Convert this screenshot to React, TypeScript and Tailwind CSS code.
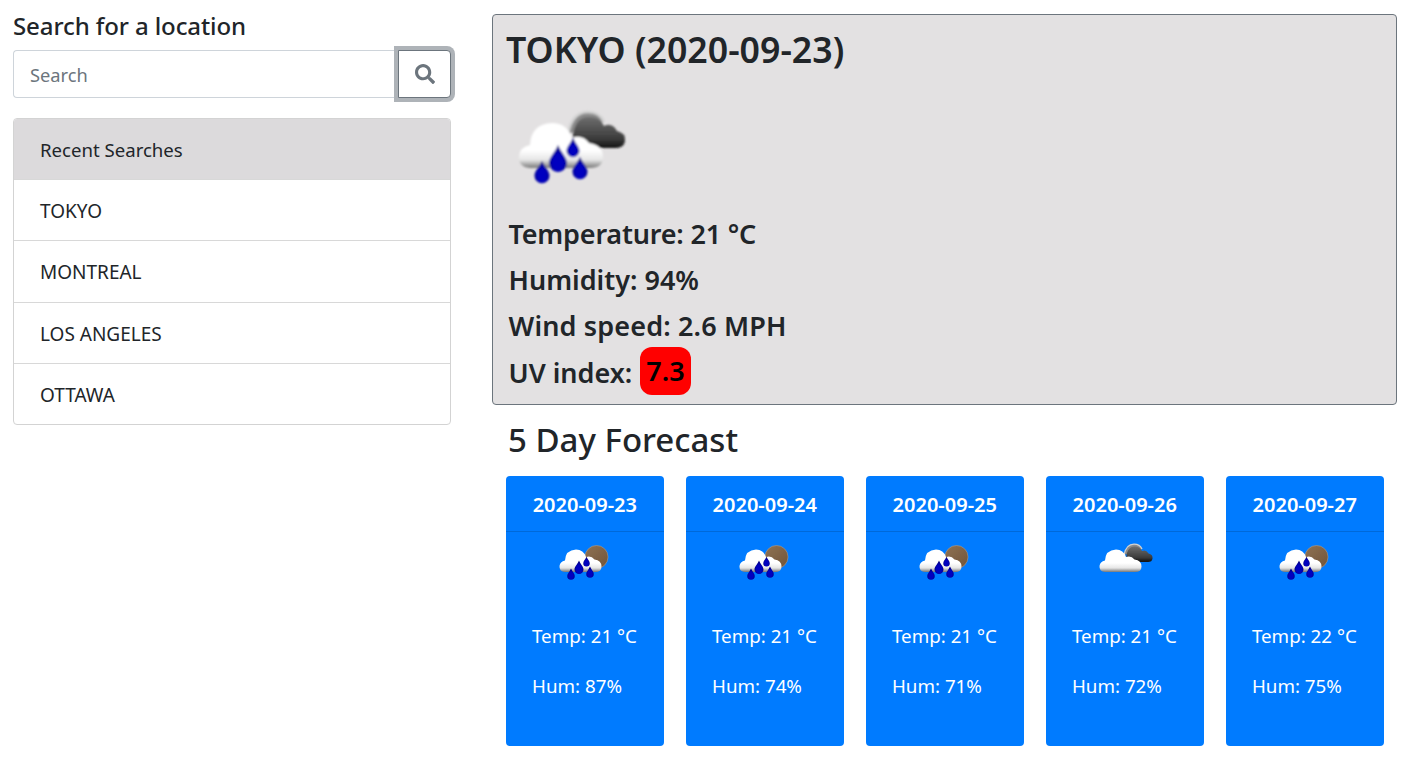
import { FaSearch } from "react-icons/fa";

type IconKind = "rainDark" | "rainSun" | "cloudDark";

const recent = ["TOKYO", "MONTREAL", "LOS ANGELES", "OTTAWA"];

const forecast: { date: string; temp: number; hum: number; icon: IconKind }[] = [
  { date: "2020-09-23", temp: 21, hum: 87, icon: "rainSun" },
  { date: "2020-09-24", temp: 21, hum: 74, icon: "rainSun" },
  { date: "2020-09-25", temp: 21, hum: 71, icon: "rainSun" },
  { date: "2020-09-26", temp: 21, hum: 72, icon: "cloudDark" },
  { date: "2020-09-27", temp: 22, hum: 75, icon: "rainSun" },
];

const drop = (x: number, y: number, r: number) =>
  `M${x} ${y - r * 1.9} C${x + r * 0.4} ${y - r} ${x + r} ${y - r * 0.5} ${x + r} ${y + r * 0.1} A${r} ${r} 0 1 1 ${x - r} ${y + r * 0.1} C${x - r} ${y - r * 0.5} ${x - r * 0.4} ${y - r} ${x} ${y - r * 1.9} Z`;

function WeatherIcon({ kind, id, className }: { kind: IconKind; id: string; className: string }) {
  const rain = kind !== "cloudDark";
  const blur = id === "big" ? 1 : 0.7;
  return (
    <svg viewBox="0 0 120 120" className={className}>
      <defs>
        <linearGradient id={`${id}-white`} x1="0" y1="0" x2="0" y2="1">
          <stop offset="0.6" stopColor="#ffffff" />
          <stop offset="0.82" stopColor="#e6e6e6" />
          <stop offset="1" stopColor="#777777" />
        </linearGradient>
        <linearGradient id={`${id}-dark`} x1="0" y1="0" x2="0" y2="1">
          <stop offset="0" stopColor="#6e6e6e" />
          <stop offset="0.7" stopColor="#3c3c3c" />
          <stop offset="1" stopColor="#111111" />
        </linearGradient>
        <linearGradient id={`${id}-sun`} x1="0" y1="0" x2="1" y2="1">
          <stop offset="0" stopColor="#8f7355" />
          <stop offset="1" stopColor="#6f5338" />
        </linearGradient>
        <radialGradient id={`${id}-drop`} cx="0.5" cy="0.65" r="0.6">
          <stop offset="0.45" stopColor="#0000c0" />
          <stop offset="1" stopColor="#000078" />
        </radialGradient>
        <filter id={`${id}-soft`}>
          <feGaussianBlur stdDeviation={blur} />
        </filter>
      </defs>
      <g filter={`url(#${id}-soft)`}>
        {kind === "rainSun" ? (
          <circle cx="83" cy="50" r="23" fill={`url(#${id}-sun)`} stroke="#b9a58f" strokeWidth="1" />
        ) : (
          <>
            <path d="M58 46 Q62 24 78 24 Q90 24 94 34" fill="#8a8a8a" stroke="#d2d2d2" strokeWidth="2.5" />
            <path
              d="M68 60 Q60 52 64 42 Q68 28 80 29 Q90 29 94 38 Q102 34 107 43 Q116 45 115 53 Q114 60 106 60 Z"
              fill={`url(#${id}-dark)`}
            />
          </>
        )}
        <path
          d="M20 80 Q8 79 9 68 Q10 59 20 57 Q21 36 42 35 Q57 35 62 50 Q72 46 79 55 Q93 57 93 69 Q93 80 80 80 Z"
          fill={`url(#${id}-white)`}
        />
        {rain && (
          <g fill={`url(#${id}-drop)`}>
            <path d={drop(48, 74, 9)} />
            <path d={drop(32, 87, 7.5)} />
            <path d={drop(70, 83, 7.5)} />
            <path d={drop(63, 62, 6.5)} />
          </g>
        )}
      </g>
    </svg>
  );
}

export default function App() {
  return (
    <div className="flex min-h-[767px] bg-white font-['Noto_Sans',sans-serif] text-[#212529]">
      <aside className="ml-[13px] w-[438px] shrink-0">
        <h2 className="mt-[10px] text-[24px] leading-[32px] font-medium tracking-[-0.1px]">Search for a location</h2>
        <div className="mt-[8px] flex h-[48px]">
          <input
            placeholder="Search"
            className="min-w-0 flex-1 rounded-l-[4px] border border-r-0 border-[#ced4da] bg-white px-4 pt-[2px] text-[18.3px] outline-none placeholder:text-[#6c757d]"
          />
          <button className="flex w-[53px] items-center justify-center rounded-r-[4px] border border-[#6c757d] bg-white text-[#6c757d] shadow-[0_0_0_4px_#aeb3b8]">
            <FaSearch size={20} />
          </button>
        </div>
        <ul className="mt-[20px] overflow-hidden rounded-[4px] border border-[#d3d3d3] text-[19px]">
          <li className="flex h-[60px] items-center bg-[#dcdadc] px-[26px] pt-[2px] text-[18.6px]">Recent Searches</li>
          {recent.map((city) => (
            <li key={city} className="flex h-[61.25px] items-center border-t border-[#d8d8d8] px-[26px] pt-[2.5px]">
              {city}
            </li>
          ))}
        </ul>
      </aside>

      <main className="mt-[14px] ml-[41px] w-[905px] shrink-0">
        <section className="h-[391px] rounded-[4px] border border-[#6c757d] bg-[#e3e1e2] pl-[13px]">
          <h1 className="mt-[12px] text-[35.7px] leading-[44px] font-semibold">TOKYO (2020-09-23)</h1>
          <WeatherIcon kind="rainDark" id="big" className="mt-[17px] ml-[4px] h-[120px] w-[120px]" />
          <div className="pl-[2.5px] text-[27px] leading-[46px] font-semibold">
            <p className="mt-[3px] tracking-[-0.2px]">Temperature: 21 °C</p>
            <p>Humidity: 94%</p>
            <p className="tracking-[0.15px]">Wind speed: 2.6 MPH</p>
            <p className="flex items-center">
              UV index:
              <span className="ml-[8px] flex h-[48px] -translate-y-[2px] items-center rounded-[12px] bg-[#ff0000] px-[6px] text-black">7.3</span>
            </p>
          </div>
        </section>

        <h2 className="mt-[13px] ml-[16px] text-[33px] leading-[44px] font-medium">5 Day Forecast</h2>

        <div className="mt-[14px] ml-[14px] flex gap-[22.4px]">
          {forecast.map((day, i) => (
            <article key={day.date} className="h-[270px] w-[157.6px] rounded-[4px] bg-[#007bff] text-white">
              <header className="flex h-[56px] items-center justify-center border-b border-[#0069d9] pt-[2px] text-[20px] font-semibold">
                {day.date}
              </header>
              <div className="flex flex-col items-center">
                <WeatherIcon kind={day.icon} id={`day-${i}`} className="h-[60px] w-[60px]" />
                <div className="w-full pl-[26px] text-[18.75px]">
                  <p className="mt-[19px] leading-[50px]">Temp: {day.temp} °C</p>
                  <p className="leading-[50px]">Hum: {day.hum}%</p>
                </div>
              </div>
            </article>
          ))}
        </div>
      </main>
    </div>
  );
}
